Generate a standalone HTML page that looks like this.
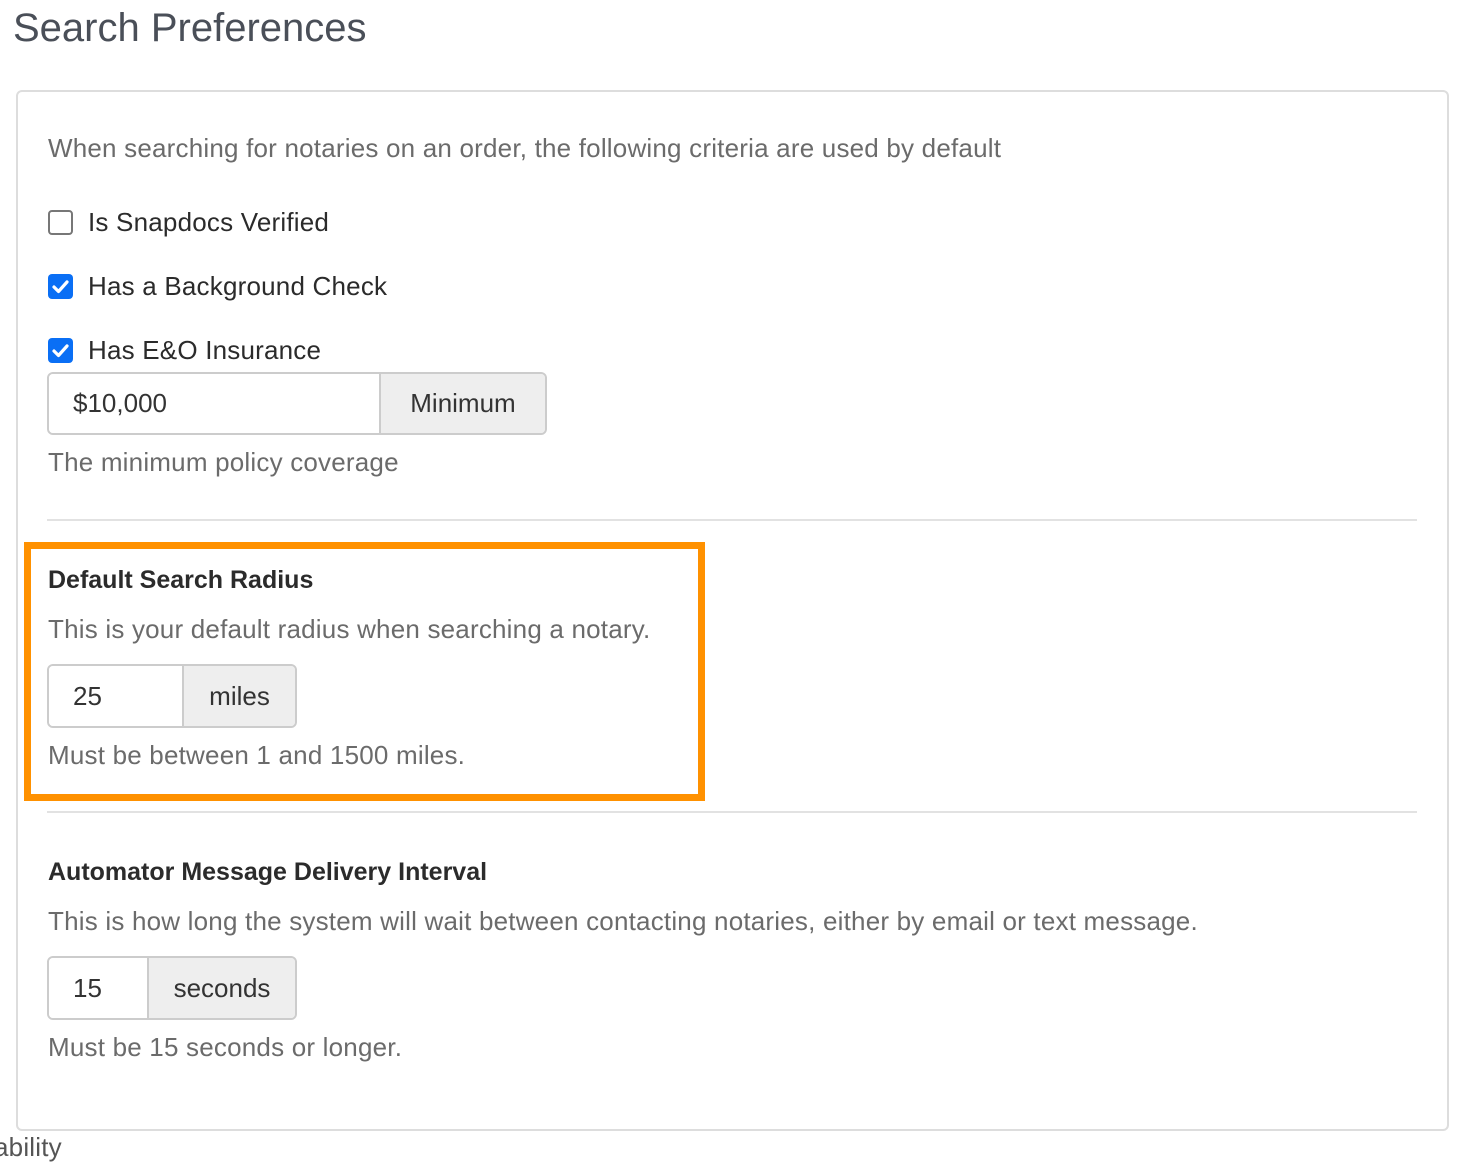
<!DOCTYPE html>
<html><head><meta charset="utf-8"><style>
*{margin:0;padding:0;box-sizing:border-box}
body{width:1466px;height:1146px;background:#fff;font-family:"Liberation Sans",sans-serif;position:relative;overflow:hidden;color:#333}
.a{position:absolute;white-space:nowrap;line-height:1}
.t{font-size:40px;color:#4a4f58;left:13px;top:8px}
.card{position:absolute;left:16px;top:90px;width:1433px;height:1041px;border:2px solid #ddd;border-radius:6px}
.g{color:#6b6b6b;font-size:26px;letter-spacing:0.2px}
.d{color:#2b2b2b;font-size:26px;letter-spacing:0.2px}
.b{color:#2b2b2b;font-size:25px;font-weight:bold}
.cb{position:absolute;left:48px;width:25px;height:25px;border-radius:4px}
.cb.off{border:2px solid #777;background:#fff}
.cb.on{background:#0a6ff5}
.ig{position:absolute;left:47px;border:2px solid #ccc;border-radius:6px;overflow:hidden;display:flex;font-size:26px;color:#333}
.ig .in{background:#fff;padding-left:24px;display:flex;align-items:center}
.ig .ad{background:#eee;border-left:2px solid #ccc;display:flex;align-items:center;justify-content:center;flex:1}
.hr{position:absolute;left:47px;width:1370px;height:2px;background:#e2e2e2}
.box{position:absolute;left:24px;top:542px;width:681px;height:259px;border:7px solid #ff9100}
</style></head><body>
<div class="a t">Search Preferences</div>
<div class="card"></div>
<div class="a g" style="left:48px;top:135px">When searching for notaries on an order, the following criteria are used by default</div>
<div class="cb off" style="top:210px"></div>
<div class="a d" style="left:88px;top:209px">Is Snapdocs Verified</div>
<div class="cb on" style="top:274px"><svg width="25" height="25" viewBox="0 0 25 25"><path d="M6 13l4.5 4.5L19 8" stroke="#fff" stroke-width="3.2" fill="none" stroke-linecap="round" stroke-linejoin="round"/></svg></div>
<div class="a d" style="left:88px;top:273px">Has a Background Check</div>
<div class="cb on" style="top:338px"><svg width="25" height="25" viewBox="0 0 25 25"><path d="M6 13l4.5 4.5L19 8" stroke="#fff" stroke-width="3.2" fill="none" stroke-linecap="round" stroke-linejoin="round"/></svg></div>
<div class="a d" style="left:88px;top:337px">Has E&amp;O Insurance</div>
<div class="ig" style="top:372px;width:500px;height:63px"><div class="in" style="width:330px">$10,000</div><div class="ad">Minimum</div></div>
<div class="a g" style="left:48px;top:449px">The minimum policy coverage</div>
<div class="hr" style="top:519px"></div>
<div class="box"></div>
<div class="a b" style="left:48px;top:568px">Default Search Radius</div>
<div class="a g" style="left:48px;top:616px">This is your default radius when searching a notary.</div>
<div class="ig" style="top:664px;width:250px;height:64px"><div class="in" style="width:133px">25</div><div class="ad">miles</div></div>
<div class="a g" style="left:48px;top:742px">Must be between 1 and 1500 miles.</div>
<div class="hr" style="top:811px"></div>
<div class="a b" style="left:48px;top:860px">Automator Message Delivery Interval</div>
<div class="a g" style="left:48px;top:908px">This is how long the system will wait between contacting notaries, either by email or text message.</div>
<div class="ig" style="top:956px;width:250px;height:64px"><div class="in" style="width:98px">15</div><div class="ad">seconds</div></div>
<div class="a g" style="left:48px;top:1034px">Must be 15 seconds or longer.</div>
<div class="a g" style="left:-6px;top:1134px;color:#555">ability</div>
</body></html>
